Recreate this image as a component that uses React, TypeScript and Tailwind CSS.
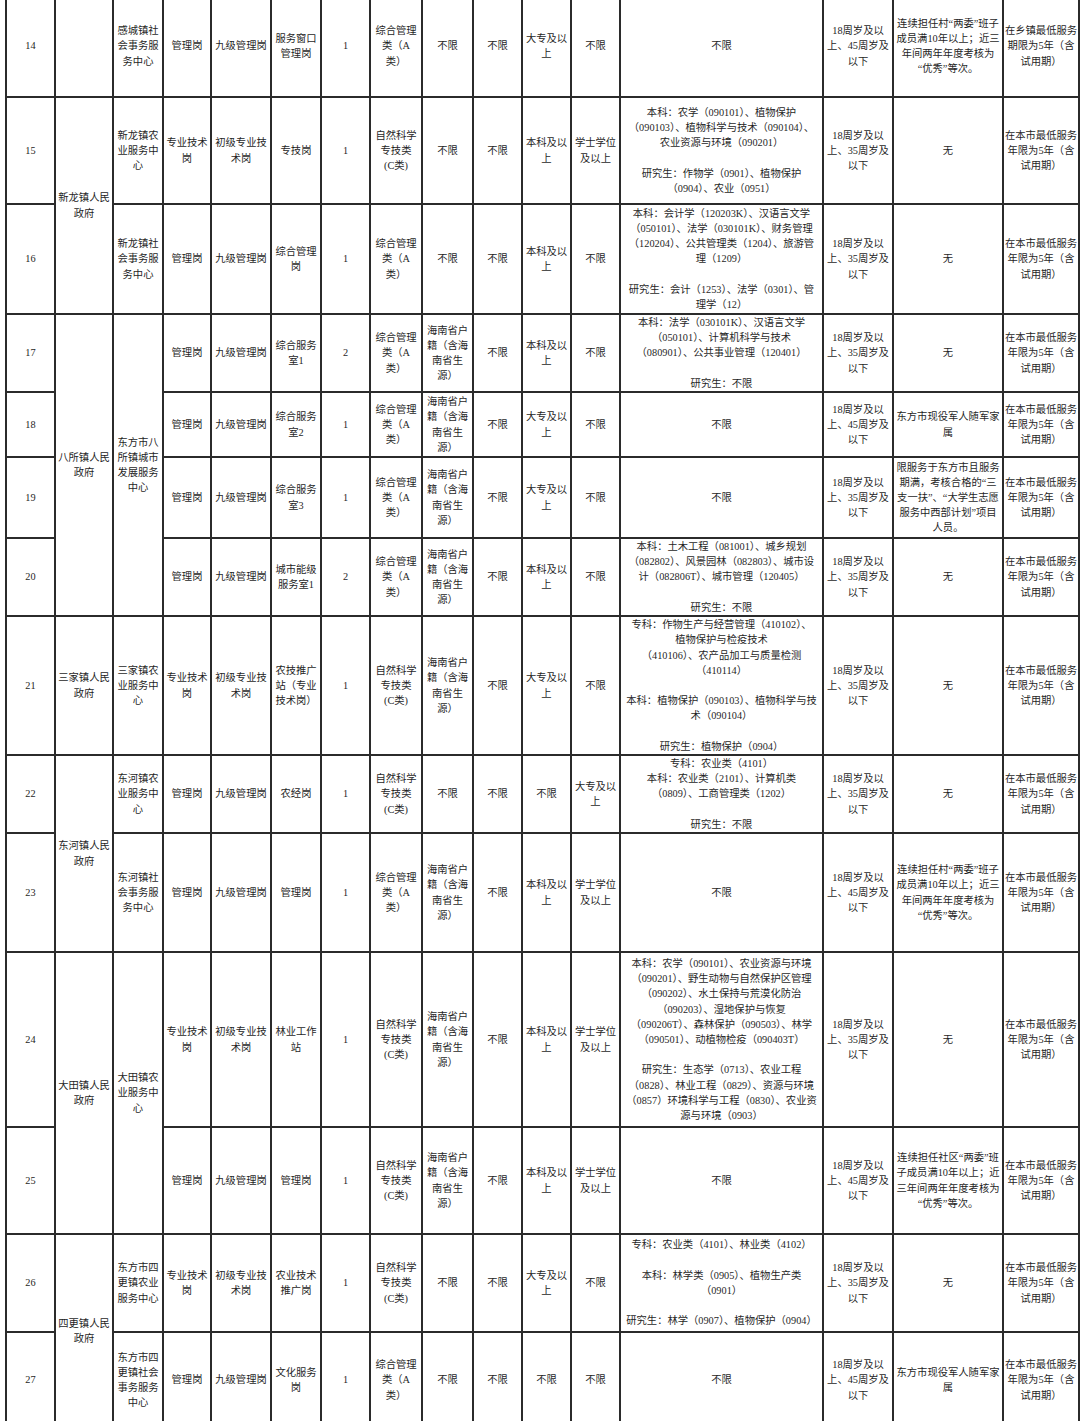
import { Fragment } from "react";

type Cell = string | [string, number];

const A = "综合管理\n类（A\n类）";
const C = "自然科学\n专技类\n(C类)";
const HN = "海南省户\n籍（含海\n南省生\n源）";
const AGE35 = "18周岁及以\n上、35周岁及\n以下";
const AGE45 = "18周岁及以\n上、45周岁及\n以下";
const SV = "在本市最低服务\n年限为5年（含\n试用期）";
const XZ = "在乡镇最低服务\n期限为5年（含\n试用期）";
const CUN = "连续担任村“两委”班子\n成员满10年以上；近三\n年间两年年度考核为\n“优秀”等次。";
const JS = "东方市现役军人随军家\n属";

const widths = [49, 58, 50, 48, 60, 50, 49, 52, 51, 49, 49, 49, 203, 70, 110, 76];

const rows: { h: string; cells: Cell[] }[] = [
  {
    h: "h-[101px]",
    cells: ["14", "", "感城镇社\n会事务服\n务中心", "管理岗", "九级管理岗", "服务窗口\n管理岗", "1", A, "不限", "不限", "大专及以\n上", "不限", "不限", AGE45, CUN, XZ],
  },
  {
    h: "h-[107px]",
    cells: [
      "15", ["新龙镇人民\n政府", 2], "新龙镇农\n业服务中\n心", "专业技术\n岗", "初级专业技\n术岗", "专技岗", "1", C, "不限", "不限", "本科及以\n上", "学士学位\n及以上",
      "本科：农学（090101）、植物保护\n（090103）、植物科学与技术（090104）、\n农业资源与环境（090201）\n\n研究生：作物学（0901）、植物保护\n（0904）、农业（0951）",
      AGE35, "无", SV,
    ],
  },
  {
    h: "h-[110px]",
    cells: [
      "16", "新龙镇社\n会事务服\n务中心", "管理岗", "九级管理岗", "综合管理\n岗", "1", A, "不限", "不限", "本科及以\n上", "不限",
      "本科：会计学（120203K）、汉语言文学\n（050101）、法学（030101K）、财务管理\n（120204）、公共管理类（1204）、旅游管\n理（1209）\n\n研究生：会计（1253）、法学（0301）、管\n理学（12）",
      AGE35, "无", SV,
    ],
  },
  {
    h: "h-[78px]",
    cells: [
      "17", ["八所镇人民\n政府", 4], ["东方市八\n所镇城市\n发展服务\n中心", 4], "管理岗", "九级管理岗", "综合服务\n室1", "2", A, HN, "不限", "本科及以\n上", "不限",
      "本科：法学（030101K）、汉语言文学\n（050101）、计算机科学与技术\n（080901）、公共事业管理（120401）\n\n研究生：不限",
      AGE35, "无", SV,
    ],
  },
  {
    h: "h-[65px]",
    cells: ["18", "管理岗", "九级管理岗", "综合服务\n室2", "1", A, HN, "不限", "大专及以\n上", "不限", "不限", AGE45, JS, SV],
  },
  {
    h: "h-[81px]",
    cells: [
      "19", "管理岗", "九级管理岗", "综合服务\n室3", "1", A, HN, "不限", "大专及以\n上", "不限", "不限", AGE35,
      "限服务于东方市且服务\n期满，考核合格的“三\n支一扶”、“大学生志愿\n服务中西部计划”项目\n人员。",
      SV,
    ],
  },
  {
    h: "h-[78px]",
    cells: [
      "20", "管理岗", "九级管理岗", "城市能级\n服务室1", "2", A, HN, "不限", "本科及以\n上", "不限",
      "本科：土木工程（081001）、城乡规划\n（082802）、风景园林（082803）、城市设\n计（082806T）、城市管理（120405）\n\n研究生：不限",
      AGE35, "无", SV,
    ],
  },
  {
    h: "h-[139px]",
    cells: [
      "21", "三家镇人民\n政府", "三家镇农\n业服务中\n心", "专业技术\n岗", "初级专业技\n术岗", "农技推广\n站（专业\n技术岗）", "1", C, HN, "不限", "大专及以\n上", "不限",
      "专科：作物生产与经营管理（410102）、\n植物保护与检疫技术\n（410106）、农产品加工与质量检测\n（410114）\n\n本科：植物保护（090103）、植物科学与技\n术（090104）\n\n研究生：植物保护（0904）",
      AGE35, "无", SV,
    ],
  },
  {
    h: "h-[78px]",
    cells: [
      "22", ["东河镇人民\n政府", 2], "东河镇农\n业服务中\n心", "管理岗", "九级管理岗", "农经岗", "1", C, "不限", "不限", "不限", "大专及以\n上",
      "专科：农业类（4101）\n本科：农业类（2101）、计算机类\n（0809）、工商管理类（1202）\n\n研究生：不限",
      AGE35, "无", SV,
    ],
  },
  {
    h: "h-[119px]",
    cells: ["23", "东河镇社\n会事务服\n务中心", "管理岗", "九级管理岗", "管理岗", "1", A, HN, "不限", "本科及以\n上", "学士学位\n及以上", "不限", AGE45, CUN, SV],
  },
  {
    h: "h-[175px]",
    cells: [
      "24", ["大田镇人民\n政府", 2], ["大田镇农\n业服务中\n心", 2], "专业技术\n岗", "初级专业技\n术岗", "林业工作\n站", "1", C, HN, "不限", "本科及以\n上", "学士学位\n及以上",
      "本科：农学（090101）、农业资源与环境\n（090201）、野生动物与自然保护区管理\n（090202）、水土保持与荒漠化防治\n（090203）、湿地保护与恢复\n（090206T）、森林保护（090503）、林学\n（090501）、动植物检疫（090403T）\n\n研究生：生态学（0713）、农业工程\n（0828）、林业工程（0829）、资源与环境\n（0857）环境科学与工程（0830）、农业资\n源与环境（0903）",
      AGE35, "无", SV,
    ],
  },
  {
    h: "h-[107px]",
    cells: [
      "25", "管理岗", "九级管理岗", "管理岗", "1", C, HN, "不限", "本科及以\n上", "学士学位\n及以上", "不限", AGE45,
      "连续担任社区“两委”班\n子成员满10年以上；近\n三年间两年年度考核为\n“优秀”等次。",
      SV,
    ],
  },
  {
    h: "h-[98px]",
    cells: [
      "26", ["四更镇人民\n政府", 2], "东方市四\n更镇农业\n服务中心", "专业技术\n岗", "初级专业技\n术岗", "农业技术\n推广岗", "1", C, "不限", "不限", "大专及以\n上", "不限",
      "专科：农业类（4101）、林业类（4102）\n\n本科：林学类（0905）、植物生产类\n（0901）\n\n研究生：林学（0907）、植物保护（0904）",
      AGE35, "无", SV,
    ],
  },
  {
    h: "h-[96px]",
    cells: ["27", "东方市四\n更镇社会\n事务服务\n中心", "管理岗", "九级管理岗", "文化服务\n岗", "1", A, "不限", "不限", "不限", "不限", "不限", AGE45, JS, SV],
  },
];

function Lines({ text }: { text: string }) {
  return (
    <>
      {text.split("\n").map((l, i) => (
        <Fragment key={i}>
          {i > 0 && <br />}
          {l}
        </Fragment>
      ))}
    </>
  );
}

export default function App() {
  return (
    <div className="min-h-screen overflow-hidden bg-white pl-[5px] font-['Liberation_Serif','Noto_Sans_CJK_SC',serif] text-[10.3px] leading-[15.2px] text-[#1f1f1f]">
      <table className="-mt-[4px] w-[1075px] table-fixed border-collapse">
        <colgroup>
          {widths.map((w, i) => (
            <col key={i} style={{ width: w }} />
          ))}
        </colgroup>
        <tbody>
          {rows.map((r, ri) => (
            <tr key={ri} className={r.h}>
              {r.cells.map((c, ci) => {
                const [t, rs] = typeof c === "string" ? [c, 1] : c;
                return (
                  <td
                    key={ci}
                    rowSpan={rs}
                    className={`whitespace-nowrap border-2 border-[#2b2b2b] p-0 text-center align-middle ${ri === 0 ? "border-t-0" : ""}`}
                  >
                    <Lines text={t} />
                  </td>
                );
              })}
            </tr>
          ))}
        </tbody>
      </table>
    </div>
  );
}
